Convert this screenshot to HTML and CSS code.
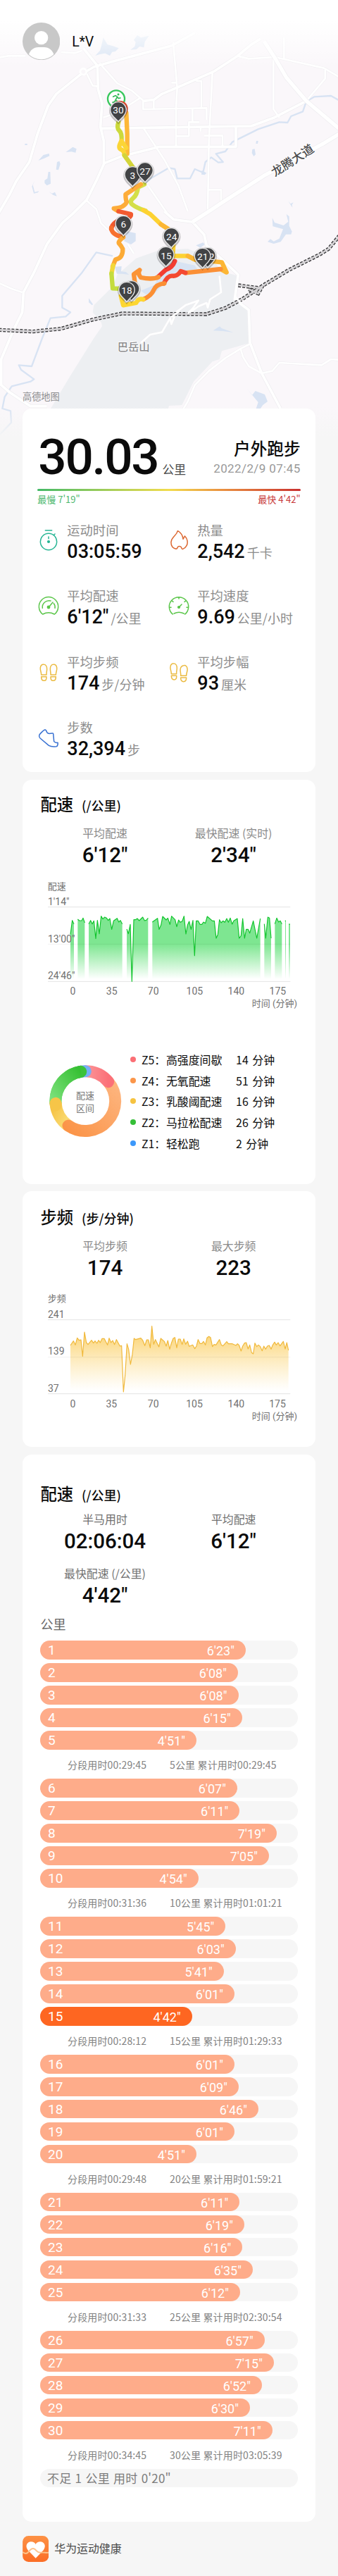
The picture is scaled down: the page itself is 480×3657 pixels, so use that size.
FILE: index.html
```html
<!DOCTYPE html>
<html lang="zh-CN">
<head>
<meta charset="utf-8">
<title>户外跑步</title>
<link rel="stylesheet" href="styles.css">
</head>
<body>
<main class="page">
<header class="hero">
<svg class="map" viewBox="0 0 1440 1920">
<defs>
<linearGradient id="fadeTop" x1="0" y1="0" x2="0" y2="1"><stop offset="0.3" stop-color="#fff"/><stop offset="1" stop-color="#fff" stop-opacity="0"/></linearGradient>
<linearGradient id="fadeEnd" x1="0" y1="0" x2="0" y2="1"><stop offset="0" stop-color="#f6f6f6" stop-opacity="0"/><stop offset="0.7" stop-color="#f6f6f6"/></linearGradient>
<g id="pin"><path d="M0 50 C-8 36-35 24-35-3 A35 35 0 1 1 35-3 C35 24 8 36 0 50Z" fill="#000" opacity=".22" transform="translate(0 3) scale(1.12)"/><path d="M0 48 C-8 34-34 22-34-3 A34 34 0 1 1 34-3 C34 22 8 34 0 48Z" fill="#424345" stroke="#e8e8e8" stroke-width="4"/></g>
</defs>
<rect width="1440" height="1920" fill="#faf7fa"/>
<path class="hill" d="M395 1330L400 1300 480 1220 500 1170 580 1100 680 1065 800 1060 880 1090 960 1160 1015 1175 1000 1275 1060 1320 1065 1460 945 1495 935 1530 905 1540 825 1625 775 1725 720 1728 700 1800 180 1800 300 1600 400 1440 435 1390 432 1375Z"/>
<g class="lake">
<path d="M440 160l18 30 20 5 28 10-14 14-14 2-10 16-20-10-22 4-20 6 20-22 6-20zM585 150l15 10 35-8-18 26-4 24-18-4-14 12-25 2 18-14 4-18-8-10zM163 684l22-24 24-6 2 10-22 10zM280 648l20-14 10-8 16 8-4 16-18-4zM243 690l10-4 4 12-8 26-10-2zM206 732l8 0 2 50-16 8-10-10 0-12 12-8zM208 816l14 8 12-6 8 18-16-6zM1075 636l10-2 4 24-8 8-8-14zM1092 600l8 0-2 12-8 0zM1228 856l10 12 12-6-6 10 2 12-8-12zM860 725l20 12-8 8-14-2zM106 612h10v6h-10zM1160 928l10 20 38 12 20-16-8-32 12 10 0 40 12 24-4 12-22 0-22 32-30 8-26-8 12-12 14 10 24-12 16-40-44-12zM540 985l38 8 0 34-20 14-30-14 8-20zM378 1270l18 26-4 4-14-12zM908 1408l28-18 8 8 50 18-44-6zM1052 1655l22 28 14-18 40 15 12 30-20 15-14 20-16-2 10-30zM148 768l-8 20 8 30 18-4-4 6-18 4-8-30zM835 1045l30-12 8 8-20 14zM740 1110l90 20 10 16-90 12-90 90-40 5-20-15 60-25 20-50zM488 1136l30-2-2 22 20 2 14 12-30-4-22 0z"/>
</g>
<g class="river">
<path d="M1445 428L1410 408 1340 412 1305 432 1290 475 1240 495 1225 522 1190 520 1100 550 990 605 960 645 920 655 950 690 930 692 900 670 875 690 865 735 830 720 810 760 755 760 745 720 720 715 650 755 575 815"/>
<path d="M480 1090L410 1075 350 1160 265 1260 265 1310 300 1330 280 1348 215 1355 180 1440 135 1560 80 1555 90 1575 145 1615 130 1625 50 1645 20 1690 10 1740 45 1750 48 1800 0 1850"/>
</g>
<g id="roads">
<g class="road-edge"><use href="#main"/></g>
<g class="road-edge thin"><use href="#minor"/></g>
<g class="road-fill thin"><path id="minor" d="M-5 245L35 238 110 238M260 222L320 226 350 215M425 270L500 355 560 385 612 430M1010 238L1060 250 1170 243 1380 290 1445 328M1385 292V335L1305 430M1210 160V255M1165 250V465L1190 500M738 180L755 375 750 460V625M905 310L890 600 885 900M610 430V465L880 460V510M655 425V462M835 345H858V460M730 352H750M440 500L500 480 600 415M612 547L700 680 760 790 800 900M870 578H948V625M750 580H805V520H850M820 465V520M855 540V560M885 808H942V860M630 790L710 905M370 855L410 890 430 950 460 980M-5 1205L50 1230 95 1245M1115 1590L1160 1580 1190 1545 1370 1555 1410 1530 1445 1532M1065 1465L1025 1485 960 1525 890 1580 830 1640 800 1710 770 1760M1025 1485L1035 1520 1060 1560 1115 1590M935 1175L942 1245 895 1275 885 1310 880 1290 845 1305 810 1330 845 1280 790 1300 750 1330 730 1380 725 1355 690 1415 640 1425 600 1460M370 315L395 365 415 368M570 1080L545 1040"/></g>
<g class="road-fill"><path id="main" d="M-10 915L40 830 70 770 125 690 160 570 205 450 240 400 340 320 400 285 480 262 730 195 830 140M355 205L415 280 418 380 435 440 428 540 442 600V700L415 760 370 850 310 910 265 950 200 1040 145 1160 100 1245 95 1330 60 1400 5 1530V1640L40 1670 130 1730 200 1730M612 430L655 425 690 400 750 375 910 305 1010 240 1070 190 1110 165M1305 430L1170 500 1070 537 430 547M445 695L520 665 680 625H1005V540M700 900L740 935 820 945 870 1000 880 1045 930 1090 1015 1170 1000 1275 1060 1320 1065 1460 1115 1590 1195 1740"/></g>
<path class="highway-edge" d="M1125 175L1170 245 1220 330 1305 430 1445 548M820 945L890 900 950 860 1130 745 1380 610 1445 570"/>
<path class="highway" d="M1125 175L1170 245 1220 330 1305 430 1445 548M820 945L890 900 950 860 1130 745 1380 610 1445 570"/>
<circle cx="355" cy="305" r="13" fill="#faf7fa" stroke="#fff" stroke-width="8"/>
</g>
<g class="rail-ties"><path d="M-5 1405L140 1412 260 1400 400 1360 520 1335 880 1338 960 1312 1030 1275 1130 1210 1230 1150 1360 1085 1400 1060 1445 1005M1015 1215L1115 1228M1060 1232L1100 1250 1120 1215"/></g>
<g class="rail-bed"><path d="M-5 1405L140 1412 260 1400 400 1360 520 1335 880 1338 960 1312 1030 1275 1130 1210 1230 1150 1360 1085 1400 1060 1445 1005M1015 1215L1115 1228M1060 1232L1100 1250 1120 1215"/></g>
<path class="road-fill thin" d="M730 1350L765 1325M800 1335L820 1315M1003 1265L1030 1295"/>
<rect width="1440" height="290" fill="url(#fadeTop)"/>
<g class="place"><text x="569" y="1493" text-anchor="middle" font-size="46">巴岳山</text>
<text class="street" transform="translate(1247 684) rotate(-33)" x="0" y="17" text-anchor="middle" font-size="51">龙腾大道</text></g>
<g class="track">
<path d="M538 480L542 570 542 655" stroke="#fdb838"/>
<path d="M505 520Q496 545 508 556T518 600" stroke="#ccd93c"/>
<path d="M518 600Q500 630 515 636T530 660M520 605L538 630" stroke="#fbd536"/>
<path d="M530 662L575 725" stroke="#d3d43a"/>
<path d="M615 785L588 798Q584 830 568 843T560 868Q580 885 620 898" stroke="#d4df48"/>
<path d="M610 895L640 912 685 955 740 990 738 1060 735 1090 800 1090 830 1105" stroke="#fdd232"/>
<path d="M685 955L740 990M800 1090L830 1105 945 1117 965 1160 940 1146" stroke="#fcb634"/>
<path d="M940 1146L790 1162" stroke="#fb9036"/>
<path d="M790 1162L770 1155Q755 1178 735 1175T698 1207" stroke="#f44a32"/>
<path d="M700 1207Q665 1210 655 1235T610 1275" stroke="#fb8f34"/>
<path d="M610 1275Q590 1268 580 1290L525 1300 515 1260" stroke="#fdd632"/>
<path d="M600 785L535 828Q535 850 540 860 530 885 485 888L505 900" stroke="#fdac3a"/>
<path d="M505 900L558 912Q560 925 535 933 480 940 474 975" stroke="#f25a30"/>
<path d="M474 970Q475 1000 525 1010" stroke="#f7702f"/>
<path d="M525 1010Q500 1030 508 1038T523 1060Q524 1100 492 1105L480 1135" stroke="#fcaa36"/>
<path d="M482 1130L475 1165" stroke="#f1d83a"/>
<path d="M475 1165L480 1228 530 1230" stroke="#c4dc3e"/>
<path d="M745 1112Q735 1140 705 1150L670 1182" stroke="#f33d32"/>
<path d="M675 1180Q650 1192 600 1182 585 1165 595 1150L570 1168 575 1205" stroke="#fb9436"/>
</g>
<circle cx="495" cy="421" r="36" fill="#fff" stroke="#38c75c" stroke-width="7"/>
<g fill="none" stroke="#32b955" stroke-width="5" stroke-linecap="round" stroke-linejoin="round"><circle cx="504" cy="402" r="2"/><path d="M482 412l10-5 8 5-8 14 8 6-2 10M492 426l-4 8-8 2M500 413l5 6 8-2"/></g>
<path d="M511 512C503 498 477 488 477 463A34 34 0 1 1 545 463C545 488 519 498 511 512Z" fill="#d9472c"/>
<use href="#pin" x="504" y="471"/><use href="#pin" x="565" y="747"/><use href="#pin" x="618" y="729"/><use href="#pin" x="526" y="956"/><use href="#pin" x="730" y="1008"/><use href="#pin" x="707" y="1088"/><use href="#pin" x="885" y="1092"/>
<g class="pin-text"><text x="902" y="1107">2</text></g>
<use href="#pin" x="863" y="1094"/><use href="#pin" x="560" y="1233"/><use href="#pin" x="540" y="1238"/>
<g class="pin-text"><text x="504" y="483">30</text><text x="565" y="761">3</text><text x="618" y="743">27</text><text x="526" y="970">6</text><text x="731" y="1022">24</text><text x="708" y="1103">15</text><text x="863" y="1108">21</text><text x="540" y="1252">18</text></g>
<rect y="1730" width="1440" height="190" fill="url(#fadeEnd)"/>
</svg>
<div class="user">
<svg class="avatar" viewBox="0 0 160 160"><defs><clipPath id="face"><circle cx="80" cy="80" r="77"/></clipPath></defs><circle cx="80" cy="80" r="80" fill="#c8c8c8"/><g fill="#fff" clip-path="url(#face)"><circle cx="80" cy="65" r="29"/><path d="M26 138c6-20 22-33 42-33h24c20 0 36 13 42 33v22H26z"/></g></svg>
<span class="user-name">L*V</span>
</div>
<div class="provider">高德地图</div>
</header>

<section class="card summary">
<div class="headline">
<div class="distance"><strong>30.03</strong><span>公里</span></div>
<div class="activity"><h1>户外跑步</h1><time>2022/2/9 07:45</time></div>
</div>
<div class="pace-scale"></div>
<div class="pace-ends"><span class="slow">最慢 7'19"</span><span class="fast">最快 4'42"</span></div>
<div class="metrics">
<div class="metric"><svg viewBox="0 0 102 102" stroke="#27b594"><circle cx="51" cy="57" r="35"/><path d="M37 9H65M51 36V44M73 29L78 24"/><circle cx="51" cy="57" r="4" fill="#27b594"/></svg><div><p>运动时间</p><b>03:05:59</b></div></div>
<div class="metric"><svg viewBox="0 0 102 102" stroke="#dc6832"><path d="M39 88C22 84 17 71 18 58C20 35 42 31 46 11C60 18 67 28 69 46L76 33C87 43 91 61 84 74C80 82 75 86 67 89C62 87 62 84 61 80C57 75 48 75 46 80C45 84 44 88 39 88Z"/></svg><div><p>热量</p><b>2,542</b><i>千卡</i></div></div>
<div class="metric"><svg viewBox="0 0 102 102" stroke="#5bc64a"><path d="M26 87A41 41 0 1 1 76 87Q51 73 26 87ZM25 61A28 28 0 0 1 60 30M78 61Q80 49 73 41M51 58L69 36"/><circle cx="51" cy="57" r="5" fill="#5bc64a"/></svg><div><p>平均配速</p><b>6'12"</b><i class="wide">/公里</i></div></div>
<div class="metric"><svg viewBox="0 0 102 102" stroke="#5bc64a"><path d="M25 87A41 41 0 1 1 77 87M30 84Q51 73 73 84M51 16V21M23 31L27 34M79 31L75 34M12 58H18M90 58H84M51 58L63 45"/><circle cx="51" cy="57" r="4" fill="#5bc64a"/></svg><div><p>平均速度</p><b>9.69</b><i class="wide">公里/小时</i></div></div>
<div class="metric"><svg viewBox="0 0 102 102" stroke="#ebbb42"><path d="M20 63C20 49 14 43 16 33C17 22 24 18 30 19C39 19 44 28 44 38C44 48 41 54 42 63ZM20 71H42C43 83 39 88 32 88C23 88 20 82 20 71Z"/><path d="M82 63C82 49 88 43 86 33C85 22 78 18 72 19C63 19 58 28 58 38C58 48 61 54 60 63ZM82 71H60C59 83 63 88 70 88C79 88 82 82 82 71Z"/></svg><div><p>平均步频</p><b>174</b><i>步/分钟</i></div></div>
<div class="metric"><svg viewBox="0 0 102 102" stroke="#ebbb42"><path d="M19 59C19 45 13 39 15 29C16 18 23 14 29 15C38 15 43 24 43 34C43 44 40 50 41 59ZM19 67H41C42 79 38 84 31 84C22 84 19 78 19 67ZM83 67C83 53 89 47 87 37C86 26 79 22 73 23C64 23 57 32 57 42C57 52 60 58 59 67ZM83 75H59C58 87 64 92 71 92C80 92 83 86 83 75Z"/></svg><div><p>平均步幅</p><b>93</b><i>厘米</i></div></div>
<div class="metric"><svg viewBox="0 0 102 102" stroke="#3871d2"><path d="M35 18C29 20 12 37 11 42C10 46 11 50 15 54L52 85C60 90 75 90 84 89C91 88 91 76 90 73C83 74 77 72 74 68L71 35C70 31 66 34 58 34C47 35 46 32 44 29C42 23 39 17 35 18Z"/></svg><div><p>步数</p><b>32,394</b><i>步</i></div></div>
</div>
</section>

<section class="card pace-card">
<h2>配速<small>(/公里)</small></h2>
<div class="stats"><div><p>平均配速</p><b>6'12"</b></div><div><p>最快配速 (实时)</p><b>2'34"</b></div></div>
<svg class="chart" viewBox="96 420 1248 600">
<defs><linearGradient id="gp" gradientUnits="userSpaceOnUse" x1="0" y1="720" x2="0" y2="870"><stop offset="0" stop-color="#7ee691"/><stop offset="1" stop-color="#7ee691" stop-opacity="0"/></linearGradient>
</defs>
<g class="grid-lines"><path d="M204 563H1237M204 880H1237"/></g>
<g fill="url(#gp)"><path d="M300 870V680L308 620 315 635V870ZM331 870V615L338 621H348L354 610 361 630V870ZM378 870V635L386 620 393 635 400 622 408 697 415 620 423 677 431 602 438 614 446 606 454 610 461 620 468 612 476 658 484 622 499 611 506 627 513 620 521 635V870ZM540 870V657L547 677 555 637 562 870 570 617H577L585 612 593 621 608 606 616 621 623 619 631 610V870ZM649 870V627L671 611 678 658 686 640 693 603 708 618 715 610 724 637 731 602 746 617 753 647 761 618 768 628 776 624 784 602 792 678 799 640 806 624 814 658 822 620 829 770 836 622H844L852 637H860L867 627 875 632 883 603 905 622H913L921 696 928 680 935 617 942 630 950 622 958 628 966 612 973 628 981 610 989 636 996 622 1011 612 1019 696 1027 685 1034 612 1042 696 1049 658H1057L1064 674 1079 622 1094 696 1109 612V870ZM1126 870V635L1132 696 1141 606 1148 610 1155 696V870ZM1171 870V635L1179 610 1187 627 1194 622 1201 635V870ZM1215 870V620H1218V870ZM1230 870V636H1236V870Z"/></g>
<path class="line-green" d="M300 680L308 620 315 635M331 615L338 621H348L354 610 361 630M378 635L386 620 393 635 400 622 408 697 415 620 423 677 431 602 438 614 446 606 454 610 461 620 468 612 476 658 484 622 499 611 506 627 513 620 521 635M540 657L547 677 555 637 562 880 570 617H577L585 612 593 621 608 606 616 621 623 619 631 610M649 627L671 611 678 658 686 640 693 603 708 618 715 610 724 637 731 602 746 617 753 647 761 618 768 628 776 624 784 602 792 678 799 640 806 624 814 658 822 620 829 770 836 622H844L852 637H860L867 627 875 632 883 603 905 622H913L921 696 928 680 935 617 942 630 950 622 958 628 966 612 973 628 981 610 989 636 996 622 1011 612 1019 696 1027 685 1034 612 1042 696 1049 658H1057L1064 674 1079 622 1094 696 1109 612M1126 635L1132 696 1141 606 1148 610 1155 696M1171 635L1179 610 1187 627 1194 622 1201 635M1216 620V624M1230 636H1236"/>
<path class="grid-mid" d="M204 721H1237"/>
<g class="axis"><text x="203" y="488" font-size="39">配速</text><text x="204" y="555">1'14"</text><text x="204" y="713">13'00"</text><text x="204" y="871">24'46"</text>
<g text-anchor="middle"><text x="310" y="936">0</text><text x="476" y="936">35</text><text x="653" y="936">70</text><text x="829" y="936">105</text><text x="1006" y="936">140</text><text x="1183" y="936">175</text></g>
<text x="1266" y="988" text-anchor="end" font-size="39">时间 (分钟)</text></g>
</svg>
<div class="zones">
<svg class="donut" viewBox="200 207 326 326">
<defs><linearGradient id="zr"><stop offset="0" stop-color="#fb9699"/><stop offset="1" stop-color="#fb7078"/></linearGradient><linearGradient id="zo" x1="1" y1="0" x2="0" y2="1"><stop offset="0" stop-color="#fdb57f"/><stop offset="1" stop-color="#fb9448"/></linearGradient><linearGradient id="zy" x1="1" y1="1" x2="0" y2="0"><stop offset="0" stop-color="#fadf7b"/><stop offset="1" stop-color="#f6c345"/></linearGradient><linearGradient id="zg" x1="0" y1="1" x2="1" y2="0"><stop offset="0" stop-color="#7be07a"/><stop offset="1" stop-color="#36c033"/></linearGradient></defs>
<g class="ring">
<path stroke="url(#zg)" d="M236 379A127.500 127.500 0 0 1 343 244"/>
<path stroke="url(#zy)" d="M290 474A127.500 127.500 0 0 1 236 379"/>
<path stroke="url(#zo)" d="M460 287A127.500 127.500 0 0 1 290 474"/>
<path stroke="url(#zr)" d="M363 242.500A127.500 127.500 0 0 1 460 287"/>
<path stroke="#76aff5" d="M343 244A127.500 127.500 0 0 1 363 242.500"/>
<path stroke="#3cc23a" d="M337 245.200A127.500 127.500 0 0 1 343 244"/>
<path class="flat" stroke="url(#zg)" d="M236 379A127.500 127.500 0 0 1 343 244"/>
<path stroke="#f6c548" d="M237 386A127.500 127.500 0 0 1 236 379"/>
</g>
<g class="donut-text"><text x="362" y="361">配速</text><text x="362" y="413">区间</text></g>
</svg>
<ul class="legend">
<li class="z5"><span>Z5：</span><span>高强度间歇</span><span>14 分钟</span></li>
<li class="z4"><span>Z4：</span><span>无氧配速</span><span>51 分钟</span></li>
<li class="z3"><span>Z3：</span><span>乳酸阈配速</span><span>16 分钟</span></li>
<li class="z2"><span>Z2：</span><span>马拉松配速</span><span>26 分钟</span></li>
<li class="z1"><span>Z1：</span><span>轻松跑</span><span>2 分钟</span></li>
</ul>
</div>
</section>

<section class="card cadence-card">
<h2>步频<small>(步/分钟)</small></h2>
<div class="stats"><div><p>平均步频</p><b>174</b></div><div><p>最大步频</p><b>223</b></div></div>
<svg class="chart" viewBox="96 440 1248 600">
<defs><linearGradient id="gc" gradientUnits="userSpaceOnUse" x1="0" y1="650" x2="0" y2="885"><stop offset="0" stop-color="#fbd67c"/><stop offset="1" stop-color="#fde3a0" stop-opacity="0"/></linearGradient></defs>
<g class="grid-lines"><path d="M204 583H1237M204 898H1237"/></g>
<path fill="url(#gc)" d="M300 885V692L313 673 321 690 329 660 337 670 345 668 352 738 360 635 368 680 375 688 390 670 398 682 405 673 413 683 420 670 427 680 435 663H444L458 690 465 661 473 680 480 671 488 688 496 667 511 695 518 693 526 890 533 820 541 685 548 708 556 773 564 730 571 662 578 667 600 661 608 670 617 693 625 668H632L640 702 647 610 655 687 662 667 677 698 685 662 700 675 708 695 715 671 723 708 731 680 738 662 745 658 753 702 760 665H768L776 688 783 664 791 687 799 674 806 696 821 690 830 706 837 695 844 667 852 684H860L867 675 875 690 882 660 890 654 897 658 905 697 912 688 920 690 935 667 943 690 950 694 966 676 973 685H990L1005 692 1012 685 1019 692 1027 716 1034 695 1042 682 1049 680 1057 707 1064 690 1072 723 1079 728 1086 682 1094 697 1101 690 1109 697 1117 715 1124 695 1132 708 1139 695 1147 692 1155 708 1162 690 1170 678 1177 690 1185 680 1193 694 1207 675 1215 707 1222 680 1229 713V885Z"/>
<path class="line-gold" d="M300 692L313 673 321 690 329 660 337 670 345 668 352 738 360 635 368 680 375 688 390 670 398 682 405 673 413 683 420 670 427 680 435 663H444L458 690 465 661 473 680 480 671 488 688 496 667 511 695 518 693 526 890 533 820 541 685 548 708 556 773 564 730 571 662 578 667 600 661 608 670 617 693 625 668H632L640 702 647 610 655 687 662 667 677 698 685 662 700 675 708 695 715 671 723 708 731 680 738 662 745 658 753 702 760 665H768L776 688 783 664 791 687 799 674 806 696 821 690 830 706 837 695 844 667 852 684H860L867 675 875 690 882 660 890 654 897 658 905 697 912 688 920 690 935 667 943 690 950 694 966 676 973 685H990L1005 692 1012 685 1019 692 1027 716 1034 695 1042 682 1049 680 1057 707 1064 690 1072 723 1079 728 1086 682 1094 697 1101 690 1109 697 1117 715 1124 695 1132 708 1139 695 1147 692 1155 708 1162 690 1170 678 1177 690 1185 680 1193 694 1207 675 1215 707 1222 680 1229 713"/>
<path class="grid-mid" d="M204 742H1237"/>
<g class="axis"><text x="203" y="507" font-size="39">步频</text><text x="204" y="575">241</text><text x="204" y="732">139</text><text x="204" y="891">37</text>
<g text-anchor="middle"><text x="310" y="955">0</text><text x="475" y="955">35</text><text x="653" y="955">70</text><text x="828" y="955">105</text><text x="1006" y="955">140</text><text x="1182" y="955">175</text></g>
<text x="1266" y="1008" text-anchor="end" font-size="39">时间 (分钟)</text></g>
</svg>
</section>

<section class="card splits-card">
<h2>配速<small>(/公里)</small></h2>
<div class="stats"><div><p>半马用时</p><b>02:06:04</b></div><div><p>平均配速</p><b>6'12"</b></div><div><p>最快配速 (/公里)</p><b>4'42"</b></div></div>
<div class="unit">公里</div>
<div class="splits">
<div class="row"><div class="bar" style="width:292px"><b>1</b><span>6'23"</span></div></div>
<div class="row"><div class="bar" style="width:281px"><b>2</b><span>6'08"</span></div></div>
<div class="row"><div class="bar" style="width:281.500px"><b>3</b><span>6'08"</span></div></div>
<div class="row"><div class="bar" style="width:286.700px"><b>4</b><span>6'15"</span></div></div>
<div class="row"><div class="bar" style="width:222px"><b>5</b><span>4'51"</span></div></div>
<p class="lap"><span>分段用时00:29:45</span><span>5公里 累计用时00:29:45</span></p>
<div class="row"><div class="bar" style="width:280px"><b>6</b><span>6'07"</span></div></div>
<div class="row"><div class="bar" style="width:283.300px"><b>7</b><span>6'11"</span></div></div>
<div class="row"><div class="bar" style="width:336px"><b>8</b><span>7'19"</span></div></div>
<div class="row"><div class="bar" style="width:325px"><b>9</b><span>7'05"</span></div></div>
<div class="row"><div class="bar" style="width:224.700px"><b>10</b><span>4'54"</span></div></div>
<p class="lap"><span>分段用时00:31:36</span><span>10公里 累计用时01:01:21</span></p>
<div class="row"><div class="bar" style="width:263.300px"><b>11</b><span>5'45"</span></div></div>
<div class="row"><div class="bar" style="width:277.700px"><b>12</b><span>6'03"</span></div></div>
<div class="row"><div class="bar" style="width:260.700px"><b>13</b><span>5'41"</span></div></div>
<div class="row"><div class="bar" style="width:276px"><b>14</b><span>6'01"</span></div></div>
<div class="row"><div class="bar best" style="width:215.700px"><b>15</b><span>4'42"</span></div></div>
<p class="lap"><span>分段用时00:28:12</span><span>15公里 累计用时01:29:33</span></p>
<div class="row"><div class="bar" style="width:276px"><b>16</b><span>6'01"</span></div></div>
<div class="row"><div class="bar" style="width:282px"><b>17</b><span>6'09"</span></div></div>
<div class="row"><div class="bar" style="width:310px"><b>18</b><span>6'46"</span></div></div>
<div class="row"><div class="bar" style="width:276px"><b>19</b><span>6'01"</span></div></div>
<div class="row"><div class="bar" style="width:222px"><b>20</b><span>4'51"</span></div></div>
<p class="lap"><span>分段用时00:29:48</span><span>20公里 累计用时01:59:21</span></p>
<div class="row"><div class="bar" style="width:283.300px"><b>21</b><span>6'11"</span></div></div>
<div class="row"><div class="bar" style="width:290px"><b>22</b><span>6'19"</span></div></div>
<div class="row"><div class="bar" style="width:287.300px"><b>23</b><span>6'16"</span></div></div>
<div class="row"><div class="bar" style="width:302px"><b>24</b><span>6'35"</span></div></div>
<div class="row"><div class="bar" style="width:284px"><b>25</b><span>6'12"</span></div></div>
<p class="lap"><span>分段用时00:31:33</span><span>25公里 累计用时02:30:54</span></p>
<div class="row"><div class="bar" style="width:318.700px"><b>26</b><span>6'57"</span></div></div>
<div class="row"><div class="bar" style="width:332px"><b>27</b><span>7'15"</span></div></div>
<div class="row"><div class="bar" style="width:315px"><b>28</b><span>6'52"</span></div></div>
<div class="row"><div class="bar" style="width:298px"><b>29</b><span>6'30"</span></div></div>
<div class="row"><div class="bar" style="width:329.700px"><b>30</b><span>7'11"</span></div></div>
<p class="lap"><span>分段用时00:34:45</span><span>30公里 累计用时03:05:39</span></p>
<div class="row rest">不足 1 公里 用时 0'20"</div>
</div>
</section>

<footer class="brand">
<svg viewBox="0 0 112 112"><defs><linearGradient id="app" x1="0" y1="0" x2="0" y2="1"><stop offset="0" stop-color="#fd9145"/><stop offset="1" stop-color="#fb6e27"/></linearGradient></defs><rect width="112" height="112" rx="25" fill="url(#app)"/><path d="M56 96L23 62C8 42 20 25 36 25C46 25 52 29 56 36C60 29 66 25 76 25C92 25 104 42 89 62Z" fill="#fff"/><path d="M0 70C8 76 16 80 24 70C34 58 42 50 52 57C62 65 64 74 78 72C92 70 98 74 112 72" fill="none" stroke="#fdc48d" stroke-width="6"/></svg>
<span>华为运动健康</span>
</footer>
</main>
</body>
</html>
```
FILE: styles.css
```css
* { box-sizing: border-box; margin: 0; padding: 0; }
body { background: #f6f6f6; color: #0b0b0b; font-family: "Noto Sans CJK SC", sans-serif; }
.page { position: relative; width: 480px; height: 3657px; overflow: hidden; }
i { font-style: normal; }

/* map header */
.hero { height: 580px; padding: 32px 32px 0; display: flex; flex-direction: column; justify-content: space-between; }
.map { position: absolute; left: 0; top: 0; width: 480px; height: 640px; }
.hill { fill: #edeff2; }
.lake { fill: #d8e3f3; }
.river { fill: none; stroke: #d8e3f3; stroke-width: 7; stroke-linejoin: round; }
.road-edge { fill: none; stroke: #eeedf0; stroke-width: 15; stroke-linejoin: round; }
.road-edge.thin { stroke-width: 11; }
.road-fill { fill: none; stroke: #fff; stroke-width: 11; stroke-linejoin: round; }
.road-fill.thin { stroke-width: 8; }
.highway-edge { fill: none; stroke: #eeedf0; stroke-width: 20; stroke-linejoin: round; }
.highway { fill: none; stroke: #fff; stroke-width: 16; stroke-linejoin: round; }
.rail-ties { fill: none; stroke: #39393b; stroke-width: 16; stroke-dasharray: 12 6; }
.rail-bed { fill: none; stroke: #d4d2d5; stroke-width: 8; }
.place { fill: #8b8b8e; stroke: #fff; stroke-width: 5; paint-order: stroke; font-weight: 500; }
.place .street { fill: #4c4c4e; }
.track { fill: none; stroke-width: 19; stroke-linecap: round; stroke-linejoin: round; }
.pin-text { fill: #fff; font: 41px Roboto, sans-serif; text-anchor: middle; }
.user { position: relative; display: flex; align-items: center; gap: 17px; }
.avatar { width: 53.300px; height: 53.300px; }
.user-name { font: 19.500px/26px Roboto, sans-serif; letter-spacing: -0.200px; padding-top: 2px; }
.provider { position: relative; font-size: 13.200px; line-height: 20px; color: #8d8d8f; margin-bottom: 7px; }

/* cards */
.card { position: relative; width: 416px; margin: 0 auto 10.700px; background: #fff; border-radius: 13px; }
.summary { height: 516px; padding: 34px 21.300px 0; }
.pace-card { height: 574px; padding-top: 17.300px; }
.cadence-card { height: 363px; padding-top: 19px; }
.splits-card { height: 1514.600px; padding-top: 38px; }

.headline { display: flex; justify-content: space-between; height: 80px; }
.distance { display: flex; align-items: baseline; gap: 6px; height: 68px; padding-left: 1px; }
.distance strong { font: 500 71px/68px Roboto, sans-serif; letter-spacing: -2.200px; padding-top: 1px; }
.distance span { font-size: 16.800px; line-height: 20px; color: #4c4c4c; }
.activity { text-align: right; padding-top: 6px; }
.activity h1 { font-size: 23.700px; line-height: 32px; font-weight: 500; }
.activity time { display: block; font: 17px/26px Roboto, sans-serif; color: #999; letter-spacing: 0.400px; }
.pace-scale { height: 3px; border-radius: 2px; background: linear-gradient(90deg, #43b967, #8cc95c 20%, #f2dc4d 50%, #ea9140 70%, #c9302f); }
.pace-ends { display: flex; justify-content: space-between; padding-top: 3px; font-size: 13px; line-height: 18px; }
.slow { color: #4db86e; }
.fast { color: #c8393a; }
.metrics { display: grid; grid-template-columns: 185px 1fr; row-gap: 33.300px; margin: 22px -10px 0 -1px; }
.metric { display: flex; gap: 9px; height: 60px; white-space: nowrap; }
.metric svg { width: 34px; height: 34px; margin-top: 10px; fill: none; stroke-width: 4.500; stroke-linecap: round; stroke-linejoin: round; }
.metric p { font-size: 18.300px; line-height: 24px; color: #8c8c8c; margin-bottom: 2px; }
.metric b { font: 500 27px/34px Roboto, sans-serif; }
.metric i { font-size: 18px; line-height: 24px; color: #8c8c8c; margin-left: 3px; }

.card h2 { display: flex; align-items: baseline; gap: 12px; height: 34px; padding-left: 25.500px; font-size: 23.300px; line-height: 34px; font-weight: 500; }
.card h2 small { font-size: 18px; font-weight: 500; }
.stats { display: grid; grid-template-columns: 1fr 1fr; row-gap: 16px; padding: 13px 25px 0 25.700px; text-align: center; }
.stats p { font-size: 15.900px; line-height: 24px; color: #8a8a8a; }
.stats b { display: block; font: 500 29.500px/36px Roboto, sans-serif; padding-top: 1px; height: 37px; }
.chart { display: block; width: 416px; height: 200px; margin-top: 8px; }
.grid-lines { stroke: #e4e4e4; stroke-width: 3; }
.grid-mid { stroke: #000; stroke-opacity: .06; stroke-width: 3; }
.line-green { fill: none; stroke: #10c42c; stroke-width: 3.500; stroke-linejoin: round; }
.line-gold { fill: none; stroke: #f0b83a; stroke-width: 3.500; stroke-linejoin: round; }
.axis { fill: #717171; font-size: 42px; font-family: Roboto, "Noto Sans CJK SC", sans-serif; font-weight: 400; }

/* pace zones */
.zones { display: flex; margin-top: 50px; padding-left: 34.700px; }
.donut { width: 108.700px; height: 108.700px; margin-top: 19px; }
.ring { fill: none; stroke-width: 51; stroke-linecap: round; }
.ring .flat { stroke-linecap: butt; }
.donut-text { fill: #777; font-size: 39px; text-anchor: middle; }
.legend { list-style: none; margin-left: 9.500px; }
.legend li { display: grid; grid-template-columns: 16px 35px 99px auto; align-items: center; height: 29.800px; font-size: 15.900px; line-height: 24px; white-space: nowrap; }
.legend li::before { content: ""; width: 8px; height: 8px; border-radius: 50%; background: var(--zone); margin-top: -2px; }
.legend span:last-child { word-spacing: 1.500px; letter-spacing: 0.200px; }
.z5 { --zone: #fb6f75; }
.z4 { --zone: #fb964a; }
.z3 { --zone: #f6c340; }
.z2 { --zone: #35bf37; }
.z1 { --zone: #3c98fa; }

/* kilometre splits */
.splits-card .stats { padding-top: 8px; }
.splits-card .stats p { color: #707070; }
.unit { margin: 10px 0 12px 25.500px; font-size: 18px; line-height: 24px; color: #666; }
.splits { width: 366px; margin-left: 25px; }
.row { height: 26.700px; margin-bottom: 5.300px; border-radius: 14px; background: #f6f6f6; }
.bar { display: flex; justify-content: space-between; height: 100%; padding: 0 16px 0 11px; border-radius: 14px; background: #feac8a; color: #fff; font-family: Roboto, sans-serif; }
.bar.best { background: #fe6621; }
.bar b { font-size: 19px; font-weight: 400; line-height: 28px; }
.bar span { font-size: 18px; line-height: 29px; }
.lap { display: flex; height: 36px; padding: 7px 0 0 39px; font-size: 14px; line-height: 18px; color: #828282; white-space: nowrap; letter-spacing: 0.150px; }
.lap span:first-child { width: 145px; }
.rest { padding-left: 10px; font-size: 17px; line-height: 26px; color: #7c7c7c; letter-spacing: 0.200px; word-spacing: 1.200px; }

.brand { position: relative; display: flex; align-items: center; gap: 8px; margin: 20px 32px 0; height: 37px; }
.brand svg { width: 37.300px; height: 37px; }
.brand span { font-size: 15.900px; line-height: 24px; color: #4b4b4b; }
```
